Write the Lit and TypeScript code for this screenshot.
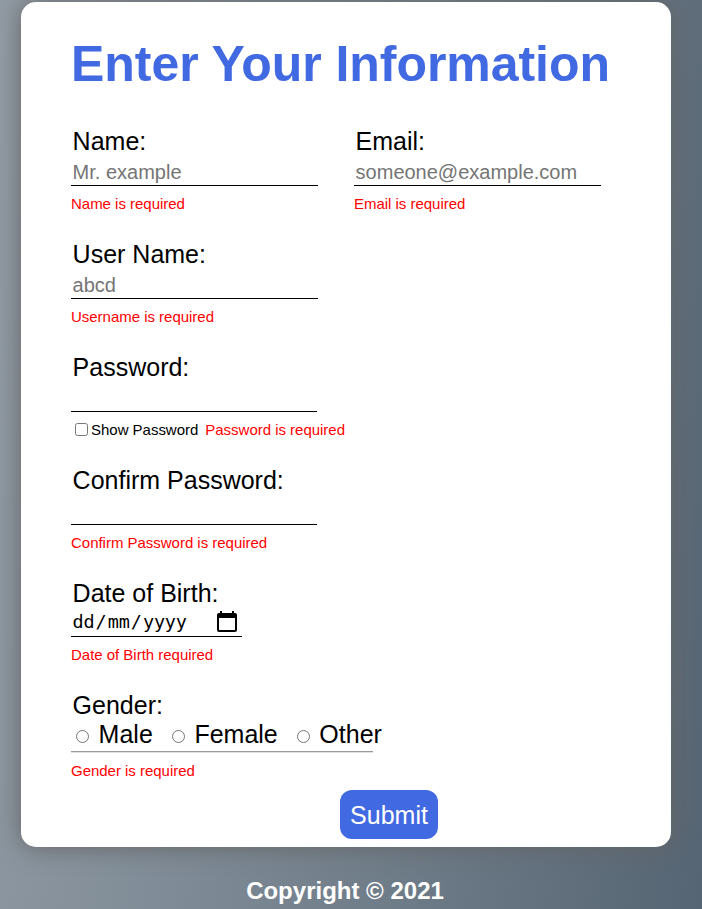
import { LitElement, html, css, nothing } from "lit";
import { customElement, property } from "lit/decorators.js";

@customElement("form-field")
class FormField extends LitElement {
  @property() label = "";
  @property() error = "";

  static styles = css`
    :host { display: block; height: 113px; }
    .label { font-size: 25px; line-height: 28px; padding-left: 1.6px; white-space: nowrap; }
    .error {
      display: flex; align-items: center; margin-top: var(--error-gap, 9px); height: 17px;
      font-size: 15px; line-height: 17px; color: #f00; white-space: nowrap; letter-spacing: -0.02px;
    }
  `;

  render() {
    return html`
      <div class="label">${this.label}</div>
      <slot></slot>
      <div class="error"><slot name="before-error"></slot><span>${this.error}</span></div>
    `;
  }
}

@customElement("app-root")
class AppRoot extends LitElement {
  static styles = css`
    * { box-sizing: border-box; }
    :host {
      display: block; height: 909px; overflow: hidden; padding: 2px 31px 0 21px;
      font-family: "Liberation Sans", Arial, sans-serif; color: #000;
      background: linear-gradient(97deg, #929ca5 0%, #76838f 50%, #566573 100%);
    }
    .card {
      height: 845px; padding: 34px 50px 0; background: #fff; border-radius: 15px;
      box-shadow: 0 0 25px #646464;
    }
    h1 { margin: 0; height: 91px; font-size: 50px; line-height: 56px; letter-spacing: -0.04px; color: #4169e1; white-space: nowrap; }
    .row { display: flex; gap: 36px; }
    .input {
      display: block; width: 247px; height: 31px; padding: 4px 1.6px 0; margin: 0;
      border: 0; border-bottom: 1px solid #000; border-radius: 0; outline: none; background: none;
      font: 20px/23px "Liberation Sans", Arial, sans-serif;
    }
    .input::placeholder { color: #757575; opacity: 1; }
    .short { width: 246px; }
    .date {
      display: flex; align-items: center; justify-content: space-between;
      width: 171px; height: 30px; padding: 0 4px 0 1.5px; border-bottom: 1px solid #000;
      font: 18.5px/24px "DejaVu Sans Mono", monospace;
    }
    .parts { display: flex; gap: 1.2px; letter-spacing: -0.2px; }
    .calendar { width: 22px; height: 22px; }
    .show { display: flex; align-items: center; color: #000; margin-right: 7px; }
    .show input { width: 13px; height: 13px; margin: 0 3px 0 4px; }
    .dob { height: 112px; }
    .gender { height: 101px; --error-gap: 10px; }
    .options { display: flex; width: 302px; height: 33px; border-bottom: 1px solid #9a9a9a; box-shadow: 0 1px #e0e0e0; }
    .option { display: flex; align-items: center; height: 30px; font-size: 25px; line-height: 28px; white-space: nowrap; margin-right: 14px; }
    .option input { flex: none; width: 13px; height: 13px; margin: 4px 9.6px 0 5px; }
    .submit {
      display: block; width: 98px; height: 49px; margin: -2px 0 0 269px; padding: 0;
      border: 0; border-radius: 12px; background: #4169e1; color: #fff;
      font: 25px/28px "Liberation Sans", Arial, sans-serif;
    }
    .footer { margin-top: 30px; text-align: center; padding-right: 2px; font-size: 24px; line-height: 28px; font-weight: 700; color: #fff; }
  `;

  private input(type: string, placeholder = "") {
    return html`<input class="input ${type === "password" ? "short" : ""}" type=${type} placeholder=${placeholder || nothing} />`;
  }

  render() {
    return html`
      <div class="card">
        <h1>Enter Your Information</h1>
        <div class="row">
          <form-field label="Name:" error="Name is required">${this.input("text", "Mr. example")}</form-field>
          <form-field label="Email:" error="Email is required">${this.input("text", "someone@example.com")}</form-field>
        </div>
        <form-field label="User Name:" error="Username is required">${this.input("text", "abcd")}</form-field>
        <form-field label="Password:" error="Password is required">
          ${this.input("password")}
          <label class="show" slot="before-error"><input type="checkbox" />Show Password</label>
        </form-field>
        <form-field label="Confirm Password:" error="Confirm Password is required">${this.input("password")}</form-field>
        <form-field class="dob" label="Date of Birth:" error="Date of Birth required">
          <div class="date">
            <span class="parts"><span>dd</span><span>/</span><span>mm</span><span>/</span><span>yyyy</span></span>
            <svg class="calendar" viewBox="0 0 22 22">
              <path fill="#000" fill-rule="evenodd" d="M4 0h2v2h10V0h2v2h1a2 2 0 0 1 2 2v15a2 2 0 0 1-2 2H3a2 2 0 0 1-2-2V4a2 2 0 0 1 2-2h1zM3 7v12h16V7z" />
            </svg>
          </div>
        </form-field>
        <form-field class="gender" label="Gender:" error="Gender is required">
          <div class="options">
            ${["Male", "Female", "Other"].map(
              (name) => html`<label class="option"><input type="radio" name="gender" />${name}</label>`
            )}
          </div>
        </form-field>
        <button class="submit">Submit</button>
      </div>
      <div class="footer">Copyright © 2021</div>
    `;
  }
}
